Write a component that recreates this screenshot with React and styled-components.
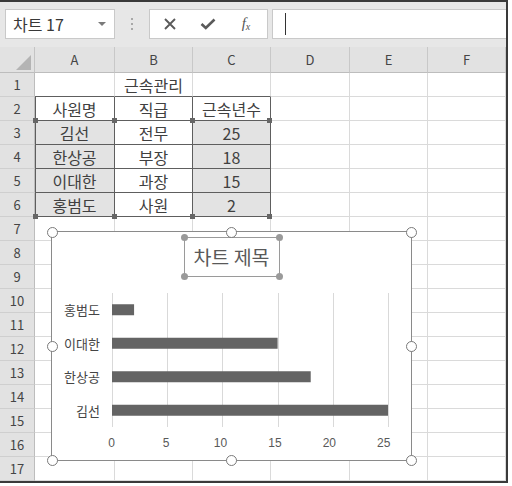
import React from 'react';
import styled, { createGlobalStyle } from 'styled-components';

const GlobalStyle = createGlobalStyle`
  html, body {
    margin: 0;
    padding: 0;
    background: #fff;
  }
  body {
    font-family: "Noto Sans CJK KR", "Noto Sans", sans-serif;
  }
`;

const COL_NAMES = ['A', 'B', 'C', 'D', 'E', 'F'];
const ROW_COUNT = 17;

const TABLE = [
    ['', '근속관리', ''],
    ['사원명', '직급', '근속년수'],
    ['김선', '전무', '25'],
    ['한상공', '부장', '18'],
    ['이대한', '과장', '15'],
    ['홍범도', '사원', '2'],
];

const SERIES = [
    { name: '홍범도', value: 2 },
    { name: '이대한', value: 15 },
    { name: '한상공', value: 18 },
    { name: '김선', value: 25 },
];

const TICKS = [0, 5, 10, 15, 20, 25];
const PLOT_W = 277;
const PLOT_H = 134;
const UNIT = 55.2 / 5;

// small squares marking the chart's source ranges (A3:A6, C3:C6)
const RANGE_XS = [36, 115, 193, 270];
const RANGE_YS = [74, 170];

const CHART_HANDLES = [
    [0, 0], [50, 0], [100, 0],
    [0, 50], [100, 50],
    [0, 100], [50, 100], [100, 100],
];

const Frame = styled.div`
  width: 508px;
  box-sizing: border-box;
  border-top: 2px solid #3a3a3a;
  border-right: 2px solid #3a3a3a;
  border-bottom: 2px solid #3a3a3a;
`;

const Toolbar = styled.div`
  height: 45px;
  box-sizing: border-box;
  padding: 7px 0 0 5px;
  background: #e7e7e7;
  display: flex;
  align-items: flex-start;
`;

const Box = styled.div`
  height: 30px;
  box-sizing: border-box;
  background: #fff;
  border: 1px solid #c9c9c9;
  display: flex;
  align-items: center;
`;

const NameBox = styled(Box)`
  width: 110px;
  padding: 0 7px;
  justify-content: space-between;
  font-size: 16px;
  color: #383838;
  line-height: 1;
`;

const Caret = styled.span`
  width: 0;
  height: 0;
  margin-right: 1px;
  border-left: 4px solid transparent;
  border-right: 4px solid transparent;
  border-top: 4px solid #7a7a7a;
`;

const Grip = styled.div`
  width: 34px;
  height: 30px;
  display: flex;
  flex-direction: column;
  align-items: center;
  justify-content: center;
  gap: 3px;

  span {
    width: 2px;
    height: 2px;
    background: #a8a8a8;
  }
`;

const FxBox = styled(Box)`
  width: 119px;
  padding-left: 1px;
`;

const FxButton = styled.span`
  width: 38px;
  display: flex;
  justify-content: center;
  align-items: center;
  color: #5a5a5a;
`;

const FxText = styled.span`
  font-family: "Liberation Serif", serif;
  font-style: italic;
  font-size: 15px;
  color: #555;
  line-height: 1;

  sub {
    font-size: 10px;
    vertical-align: -2px;
  }
`;

const FormulaBox = styled(Box)`
  flex: 1;
  margin-left: 4px;
  border-right: none;
  padding-left: 12px;
`;

const TextCursor = styled.span`
  width: 1px;
  height: 22px;
  background: #333;
`;

const Sheet = styled.div`
  position: relative;
`;

const Grid = styled.div`
  display: grid;
  grid-template-columns: 35px 80px 78px 78px 79px 78px 78px;
  grid-template-rows: 26px repeat(${ROW_COUNT}, 24px);
`;

const HeadCell = styled.div`
  box-sizing: border-box;
  background: #e2e2e2;
  display: flex;
  align-items: center;
  justify-content: center;
  font-size: 13px;
  color: #454545;
  line-height: 1;
`;

const Corner = styled(HeadCell)`
  position: relative;
  border-right: 1px solid #c4c4c4;
  border-bottom: 1px solid #bdbdbd;
`;

const CornerMark = styled.span`
  position: absolute;
  right: 3px;
  bottom: 2px;
  width: 0;
  height: 0;
  border-left: 15px solid transparent;
  border-bottom: 15px solid #b4b4b4;
`;

const ColHead = styled(HeadCell)`
  border-right: 1px solid #c8c8c8;
  border-bottom: 1px solid #bdbdbd;
`;

const RowHead = styled(HeadCell)`
  border-right: 1px solid #bdbdbd;
  border-bottom: 1px solid #cfcfcf;
`;

const LINE = '#dadada';
const RULE = '#5e5e5e';

const Cell = styled.div`
  box-sizing: border-box;
  display: flex;
  align-items: center;
  justify-content: center;
  background: ${p => (p.$sel ? '#e3e3e3' : '#fff')};
  border-right: 1px solid ${p => (p.$ruleR ? RULE : LINE)};
  border-bottom: 1px solid ${p => (p.$ruleB ? RULE : LINE)};
  box-shadow: ${p => (p.$ruleL ? `inset 1px 0 0 ${RULE}` : 'none')};
  font-size: 16px;
  color: #404040;
  line-height: 1;
`;

const RangeHandle = styled.span`
  position: absolute;
  left: ${p => p.$x - 3}px;
  top: ${p => p.$y - 3}px;
  width: 5px;
  height: 5px;
  background: #666;
`;

const Chart = styled.div`
  position: absolute;
  left: 51px;
  top: 184px;
  width: 361px;
  height: 230px;
  box-sizing: border-box;
  background: #fff;
  border: 1px solid #8a8a8a;
  display: flex;
  flex-direction: column;
`;

const ChartHandle = styled.span`
  position: absolute;
  left: ${p => p.$x}%;
  top: ${p => p.$y}%;
  width: 11px;
  height: 11px;
  box-sizing: border-box;
  margin: -5.5px 0 0 -5.5px;
  border-radius: 50%;
  border: 1.5px solid #7a7a7a;
  background: #fff;
`;

const TitleArea = styled.div`
  height: 61px;
  box-sizing: border-box;
  padding-top: 5px;
  display: flex;
  justify-content: center;
`;

const TitleBox = styled.div`
  position: relative;
  width: 96px;
  height: 40px;
  box-sizing: border-box;
  border: 1px solid #9a9a9a;
  display: flex;
  align-items: center;
  justify-content: center;
  font-size: 19.5px;
  color: #595959;
  line-height: 1;
`;

const TitleDot = styled.span`
  position: absolute;
  width: 7px;
  height: 7px;
  border-radius: 50%;
  background: #9a9a9a;
  ${p => (p.$top ? 'top: -4px;' : 'bottom: -4px;')}
  ${p => (p.$left ? 'left: -4px;' : 'right: -4px;')}
`;

const PlotRow = styled.div`
  height: ${PLOT_H}px;
  display: grid;
  grid-template-columns: 60px ${PLOT_W}px;
`;

const Categories = styled.div`
  display: grid;
  grid-template-rows: repeat(${SERIES.length}, 1fr);
`;

const Category = styled.span`
  padding-right: 12px;
  display: flex;
  align-items: center;
  justify-content: flex-end;
  font-size: 13px;
  color: #454545;
  line-height: 1;
`;

const AxisRow = styled.div`
  padding: 10px 0 0 ${60 - 27.6}px;
  display: flex;
`;

const AxisLabel = styled.span`
  width: 55.2px;
  text-align: center;
  font-family: "Liberation Sans", sans-serif;
  font-size: 12px;
  color: #595959;
  line-height: 12px;
`;

const CrossIcon = () => (
    <svg width="12" height="12" viewBox="0 0 12 12">
        <path d="M1 1 L11 11 M11 1 L1 11" stroke="#5a5a5a" strokeWidth="1.9" fill="none" />
    </svg>
);

const CheckIcon = () => (
    <svg width="16" height="12" viewBox="0 0 16 12">
        <path d="M1.5 6 L5.8 10 L14.5 1.5" stroke="#5a5a5a" strokeWidth="2.6" fill="none" />
    </svg>
);

const BarPlot = () => {
    const band = PLOT_H / SERIES.length;
    return (
        <svg width={PLOT_W} height={PLOT_H}>
            {TICKS.map(t => {
                const x = Math.round(t * UNIT) + 0.5;
                return <line key={t} x1={x} x2={x} y1={0} y2={PLOT_H} stroke="#d9d9d9" strokeWidth="1" />;
            })}
            {SERIES.map((s, i) => (
                <rect
                    key={s.name}
                    x={0}
                    y={band * i + band / 2 - 5.5}
                    width={s.value * UNIT}
                    height={11}
                    fill="#646464"
                />
            ))}
        </svg>
    );
};

const App = () => {
    return (
        <>
            <GlobalStyle />
            <Frame>
                <Toolbar>
                    <NameBox>
                        <span>차트 17</span>
                        <Caret />
                    </NameBox>
                    <Grip>
                        <span />
                        <span />
                        <span />
                    </Grip>
                    <FxBox>
                        <FxButton><CrossIcon /></FxButton>
                        <FxButton><CheckIcon /></FxButton>
                        <FxButton><FxText>f<sub>x</sub></FxText></FxButton>
                    </FxBox>
                    <FormulaBox>
                        <TextCursor />
                    </FormulaBox>
                </Toolbar>

                <Sheet>
                    <Grid>
                        <Corner><CornerMark /></Corner>
                        {COL_NAMES.map(c => <ColHead key={c}>{c}</ColHead>)}
                        {Array.from({ length: ROW_COUNT }, (_, r) => (
                            <React.Fragment key={r}>
                                <RowHead>{r + 1}</RowHead>
                                {COL_NAMES.map((c, ci) => {
                                    const inTable = r >= 1 && r <= 5 && ci <= 2;
                                    return (
                                        <Cell
                                            key={c}
                                            $ruleR={inTable}
                                            $ruleB={inTable || (r === 0 && ci <= 2)}
                                            $ruleL={inTable && ci === 0}
                                            $sel={r >= 2 && r <= 5 && (ci === 0 || ci === 2)}
                                        >
                                            {(TABLE[r] && TABLE[r][ci]) || ''}
                                        </Cell>
                                    );
                                })}
                            </React.Fragment>
                        ))}
                    </Grid>

                    {RANGE_YS.map(y => RANGE_XS.map(x => <RangeHandle key={`${x}-${y}`} $x={x} $y={y} />))}

                    <Chart>
                        <TitleArea>
                            <TitleBox>
                                차트 제목
                                <TitleDot $top $left />
                                <TitleDot $top />
                                <TitleDot $left />
                                <TitleDot />
                            </TitleBox>
                        </TitleArea>
                        <PlotRow>
                            <Categories>
                                {SERIES.map(s => <Category key={s.name}>{s.name}</Category>)}
                            </Categories>
                            <BarPlot />
                        </PlotRow>
                        <AxisRow>
                            {TICKS.map(t => <AxisLabel key={t}>{t}</AxisLabel>)}
                        </AxisRow>
                        {CHART_HANDLES.map(([x, y]) => <ChartHandle key={`${x}-${y}`} $x={x} $y={y} />)}
                    </Chart>
                </Sheet>
            </Frame>
        </>
    );
};

export default App;
